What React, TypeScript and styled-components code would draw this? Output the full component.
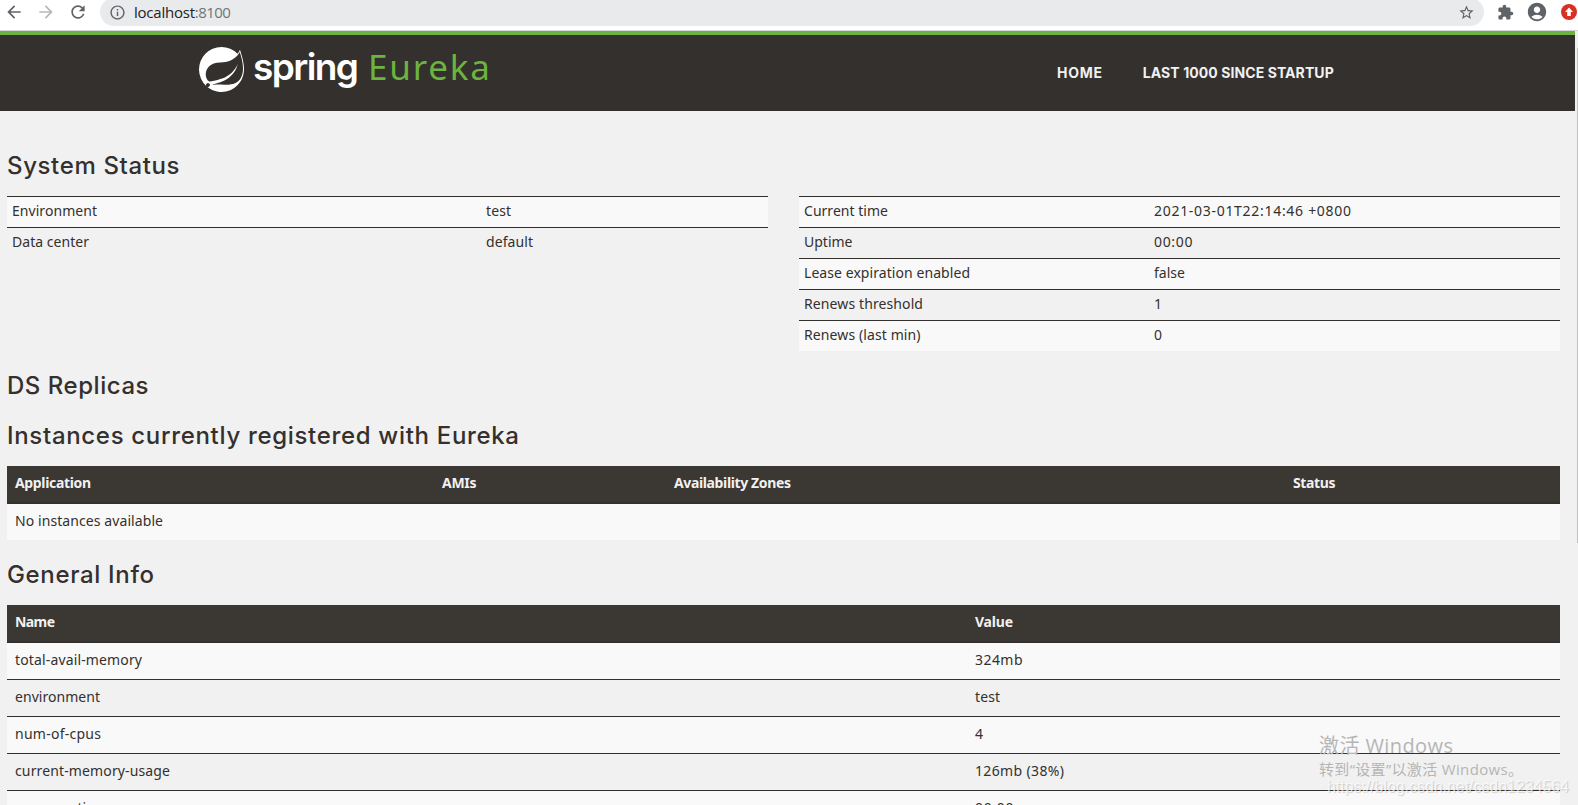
import React, { useLayoutEffect, useRef, useState } from "react";
import styled, { createGlobalStyle } from "styled-components";
import { SiSpring } from "react-icons/si";
import {
  MdArrowBack,
  MdArrowForward,
  MdRefresh,
  MdInfoOutline,
  MdStarBorder,
  MdExtension,
  MdAccountCircle,
} from "react-icons/md";

const Global = createGlobalStyle`
  * { box-sizing: border-box; }
  html, body { margin: 0; height: 805px; overflow: hidden; background: #f1f1f1; }
  body { font: 14px/20px "Noto Sans", "Noto Sans CJK SC", sans-serif; color: #34302d; }
`;

const heading = `"Inter", sans-serif`;

/* Text whose letter spacing is adjusted so that it takes the given width. */
const Run = styled.span`
  display: inline-block;
  white-space: pre;
`;

function Tracked({ width, children }: { width: number; children: string }) {
  const ref = useRef<HTMLSpanElement>(null);
  const [spacing, setSpacing] = useState(0);
  useLayoutEffect(() => {
    const el = ref.current;
    if (!el || children.length < 2) return;
    const natural = el.getBoundingClientRect().width - spacing * children.length;
    setSpacing((width - natural) / (children.length - 1));
  }, [width, children]);
  return (
    <Run ref={ref} style={{ letterSpacing: `${spacing}px` }}>
      {children}
    </Run>
  );
}

const Window = styled.div`
  position: relative;
  width: 1578px;
  height: 805px;
  overflow: hidden;
  display: flex;
  flex-direction: column;
`;

const BrowserBar = styled.div`
  flex: none;
  height: 31px;
  background: #fff;
  border-bottom: 1px solid #d5d6d9;
  display: flex;
  align-items: flex-start;
  color: #5f6368;
`;

const NavButtons = styled.div`
  width: 100px;
  height: 24px;
  padding-left: 4px;
  display: flex;
  align-items: center;
  gap: 12px;
`;

const BarIcon = styled.span<{ $faded?: boolean }>`
  display: flex;
  opacity: ${(p) => (p.$faded ? 0.45 : 1)};
`;

const AddressPill = styled.div`
  width: 1384px;
  height: 28px;
  margin-top: -2px;
  padding: 0 9px 0 9px;
  border-radius: 14px;
  background: #e9eaec;
  display: flex;
  align-items: center;
`;

const Address = styled.div`
  flex: 1;
  margin-left: 8px;
  font: 15px/20px "Open Sans", sans-serif;
  color: #202124;
`;

const Port = styled.span`
  color: #70757a;
`;

const Tools = styled.div`
  height: 24px;
  padding-left: 13px;
  display: flex;
  align-items: center;
`;

const Account = styled.span`
  display: flex;
  margin: 0 13px 0 12px;
`;

const Viewport = styled.div`
  flex: 1;
  min-height: 0;
  display: flex;
`;

const Page = styled.main`
  width: 1575px;
  height: 774px;
  overflow: hidden;
`;

const Scrollbar = styled.div`
  width: 3px;
  padding: 17px 0 0 2px;
  background: #f1f1f1;
`;

const Thumb = styled.div`
  height: 495px;
  background: #c1c1c1;
`;

const Header = styled.header`
  height: 80px;
  border-top: 4px solid #6db33f;
  background: #34302d;
  display: flex;
  align-items: flex-start;
`;

const Brand = styled.div`
  width: 1057px;
  padding: 12px 0 0 199px;
  display: flex;
  align-items: flex-start;
  color: #fff;
`;

const BrandName = styled.span`
  width: 115px;
  margin: -2px 0 0 9px;
  font: 600 37px/44px ${heading};
`;

const Product = styled.span`
  margin-top: -2px;
  font: 400 35px/44px "Noto Sans", sans-serif;
  color: #6db33f;
`;

const Menu = styled.nav`
  display: flex;
  gap: 40px;
  padding-top: 28px;
  font: 700 14px/20px ${heading};
  color: #f1f1f1;
`;

const MenuItem = styled.a``;

const Title = styled.h1<{ $top: number; $gap: number }>`
  margin: 0;
  padding-top: ${(p) => p.$top}px;
  margin-bottom: ${(p) => p.$gap}px;
  font: 500 24px/26px ${heading};
  color: #34302d;
`;

const Content = styled.div`
  width: 1553px;
  margin-left: 7px;
`;

const Columns = styled.div`
  display: flex;
  align-items: flex-start;
  gap: 31px;
  height: 155px;
`;

const StatusTable = styled.div`
  width: 761px;
`;

const StatusRow = styled.div<{ $first: number }>`
  display: grid;
  grid-template-columns: ${(p) => p.$first}px 1fr;
  height: 31px;
  padding: 4px 5px 5px;
  border-top: 1px solid #34302d;
  &:nth-child(odd) { background: #f9f9f9; }
`;

const Table = styled.div`
  width: 1553px;
`;

const HeadRow = styled.div<{ $cols: string }>`
  display: grid;
  grid-template-columns: ${(p) => p.$cols};
  height: 38px;
  padding: 7px 8px;
  background: #3b3732;
  border-bottom: 2px solid #34302d;
  color: #f1f1f1;
  font-weight: 700;
`;

const BodyRow = styled.div<{ $cols: string }>`
  display: grid;
  grid-template-columns: ${(p) => p.$cols};
  height: 37px;
  padding: 7px 8px 8px;
  border-top: 1px solid #34302d;
  &:nth-child(even) { background: #f9f9f9; }
  &:nth-child(2) { border-top: 0; height: 36px; }
`;

const Activation = styled.div`
  position: absolute;
  left: 1319px;
  top: 732px;
  color: #b5b5b5;
`;

const ActivationTitle = styled.div`
  font: 400 20px/27px "Open Sans", "Noto Sans CJK SC", sans-serif;
`;

const ActivationHint = styled.div`
  margin-top: -1px;
  font: 400 15px/22px "Open Sans", "Noto Sans CJK SC", sans-serif;
`;

const Watermark = styled.div`
  position: absolute;
  left: 1327px;
  top: 777px;
  font: 16px/20px "Liberation Sans", sans-serif;
  color: rgba(255, 255, 255, 0.7);
  text-shadow: 1px 1px 1px rgba(0, 0, 0, 0.16);
`;

type Cell = [string, number];

const environment: Cell[][] = [
  [["Environment", 85], ["test", 25]],
  [["Data center", 77], ["default", 47]],
];

const runtime: Cell[][] = [
  [["Current time", 84], ["2021-03-01T22:14:46 +0800", 197]],
  [["Uptime", 48.5], ["00:00", 38.5]],
  [["Lease expiration enabled", 166], ["false", 31]],
  [["Renews threshold", 119], ["1", 7]],
  [["Renews (last min)", 116.5], ["0", 8]],
];

const info: Cell[][] = [
  [["total-avail-memory", 127], ["324mb", 47.5]],
  [["environment", 85], ["test", 25]],
  [["num-of-cpus", 86], ["4", 8]],
  [["current-memory-usage", 155], ["126mb (38%)", 89]],
  [["server-uptime", 92], ["00:00", 38.5]],
];

const instanceCols = "427px 232px 619px 1fr";
const infoCols = "960px 1fr";

function Cells({ row }: { row: Cell[] }) {
  return (
    <>
      {row.map(([text, width]) => (
        <div key={text}>
          <Tracked width={width}>{text}</Tracked>
        </div>
      ))}
    </>
  );
}

function UpdateBadge() {
  return (
    <svg width="16" height="16" viewBox="0 0 16 16">
      <circle cx="8" cy="8" r="8" fill="#d93025" />
      <path d="M8 3.6 12 8H9.8v4H6.2V8H4z" fill="#fff" />
    </svg>
  );
}

export default function App() {
  return (
    <Window>
      <Global />
      <BrowserBar>
        <NavButtons>
          <BarIcon><MdArrowBack size={20} /></BarIcon>
          <BarIcon $faded><MdArrowForward size={20} /></BarIcon>
          <BarIcon><MdRefresh size={20} /></BarIcon>
        </NavButtons>
        <AddressPill>
          <MdInfoOutline size={17} />
          <Address>
            <Tracked width={61}>localhost</Tracked>
            <Port><Tracked width={36}>:8100</Tracked></Port>
          </Address>
          <MdStarBorder size={17} />
        </AddressPill>
        <Tools>
          <MdExtension size={17} />
          <Account><MdAccountCircle size={22} /></Account>
          <UpdateBadge />
        </Tools>
      </BrowserBar>

      <Viewport>
        <Page>
          <Header>
            <Brand>
              <SiSpring size={45} />
              <BrandName><Tracked width={106}>spring</Tracked></BrandName>
              <Product><Tracked width={122}>Eureka</Tracked></Product>
            </Brand>
            <Menu>
              <MenuItem><Tracked width={45}>HOME</Tracked></MenuItem>
              <MenuItem><Tracked width={191}>LAST 1000 SINCE STARTUP</Tracked></MenuItem>
            </Menu>
          </Header>

          <Content>
            <Title $top={42} $gap={17}><Tracked width={172.5}>System Status</Tracked></Title>
            <Columns>
              <StatusTable>
                {environment.map((row) => (
                  <StatusRow key={row[0][0]} $first={474}><Cells row={row} /></StatusRow>
                ))}
              </StatusTable>
              <StatusTable>
                {runtime.map((row) => (
                  <StatusRow key={row[0][0]} $first={350}><Cells row={row} /></StatusRow>
                ))}
              </StatusTable>
            </Columns>

            <Title $top={22} $gap={0}><Tracked width={141.5}>DS Replicas</Tracked></Title>
            <Title $top={24} $gap={17}><Tracked width={512}>Instances currently registered with Eureka</Tracked></Title>
            <Table>
              <HeadRow $cols={instanceCols}>
                <Cells row={[["Application", 76], ["AMIs", 34.5], ["Availability Zones", 117], ["Status", 42.5]]} />
              </HeadRow>
              <BodyRow $cols={instanceCols}>
                <Cells row={[["No instances available", 148]]} />
              </BodyRow>
            </Table>

            <Title $top={22} $gap={17}><Tracked width={147}>General Info</Tracked></Title>
            <Table>
              <HeadRow $cols={infoCols}>
                <Cells row={[["Name", 40], ["Value", 38]]} />
              </HeadRow>
              {info.map((row) => (
                <BodyRow key={row[0][0]} $cols={infoCols}><Cells row={row} /></BodyRow>
              ))}
            </Table>
          </Content>
        </Page>
        <Scrollbar><Thumb /></Scrollbar>
      </Viewport>

      <Activation>
        <ActivationTitle><Tracked width={134}>激活 Windows</Tracked></ActivationTitle>
        <ActivationHint><Tracked width={204}>转到“设置”以激活 Windows。</Tracked></ActivationHint>
      </Activation>
      <Watermark><Tracked width={242}>https://blog.csdn.net/csdn1234564</Tracked></Watermark>
    </Window>
  );
}
